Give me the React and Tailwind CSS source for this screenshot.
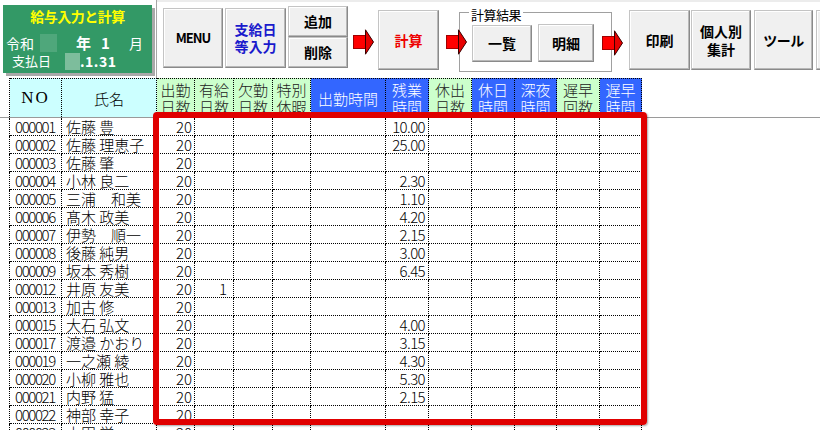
import React from "react";

const cols = [
  { w: "w-[10px]", label: "", bg: "bg-white", tc: "", blank: true },
  { w: "w-[52px]", label: "NO", bg: "bg-[#ccffff]", tc: "text-black", serif: true },
  { w: "w-[95px]", label: "氏名", bg: "bg-[#ccffff]", tc: "text-black" },
  { w: "w-[38px]", label: "出勤\n日数", bg: "bg-[#ccffcc]", tc: "text-[#222]" },
  { w: "w-[39px]", label: "有給\n日数", bg: "bg-[#ccffcc]", tc: "text-[#222]" },
  { w: "w-[39px]", label: "欠勤\n日数", bg: "bg-[#ccffcc]", tc: "text-[#222]" },
  { w: "w-[38px]", label: "特別\n休暇", bg: "bg-[#ccffcc]", tc: "text-[#222]" },
  { w: "w-[75px]", label: "出勤時間", bg: "bg-[#3366ff]", tc: "text-white" },
  { w: "w-[43px]", label: "残業\n時間", bg: "bg-[#3366ff]", tc: "text-white" },
  { w: "w-[43px]", label: "休出\n日数", bg: "bg-[#ccffcc]", tc: "text-[#222]" },
  { w: "w-[43px]", label: "休日\n時間", bg: "bg-[#3366ff]", tc: "text-white" },
  { w: "w-[42px]", label: "深夜\n時間", bg: "bg-[#3366ff]", tc: "text-white" },
  { w: "w-[43px]", label: "遅早\n回数", bg: "bg-[#ccffcc]", tc: "text-[#222]" },
  { w: "w-[42px]", label: "遅早\n時間", bg: "bg-[#3366ff]", tc: "text-white" },
];

const rows = [
  ["000001", "佐藤 豊", "20", "", "10.00"],
  ["000002", "佐藤 理恵子", "20", "", "25.00"],
  ["000003", "佐藤 肇", "20", "", ""],
  ["000004", "小林 良二", "20", "", "2.30"],
  ["000005", "三浦　和美", "20", "", "1.10"],
  ["000006", "髙木 政美", "20", "", "4.20"],
  ["000007", "伊勢　順一", "20", "", "2.15"],
  ["000008", "後藤 純男", "20", "", "3.00"],
  ["000009", "坂本 秀樹", "20", "", "6.45"],
  ["000012", "井原 友美", "20", "1", ""],
  ["000013", "加古 修", "20", "", ""],
  ["000015", "大石 弘文", "20", "", "4.00"],
  ["000017", "渡邉 かおり", "20", "", "3.15"],
  ["000019", "一之瀬 綾", "20", "", "4.30"],
  ["000020", "小柳 雅也", "20", "", "5.30"],
  ["000021", "内野 猛", "20", "", "2.15"],
  ["000022", "神部 幸子", "20", "", ""],
  ["000023", "山田 学", "20", "", ""],
];

const btn =
  "shrink-0 flex items-center justify-center text-center font-bold bg-[#f0f0f0] border border-[#c4c4c4] border-r-[#8a8a8a] border-b-[#8a8a8a] shadow-[inset_-1px_-1px_0_#b8b8b8,inset_1px_1px_0_#ffffff]";

function Arrow({ className }) {
  return (
    <svg width="21" height="26" viewBox="0 0 21 26" className={className}>
      <rect x="0.5" y="6.5" width="13" height="13" fill="#ff0000" stroke="#a00000" strokeWidth="1" />
      <polygon points="12.5,0.8 20.5,13 12.5,25.2" fill="#e60000" stroke="#3a0000" strokeWidth="1" />
    </svg>
  );
}

function Toolbar() {
  return (
    <div className="flex h-[78px] shrink-0">
      <div className="w-[157px] h-[78px] shrink-0 border-r border-[#a6a6a6]">
        <div className="ml-[3px] mt-[5px] w-[149px] h-[68px] bg-[#339966] shadow-[3px_3px_0_#a9a9a9] text-white flex flex-col">
          <div className="h-[22px] flex items-center justify-center text-[#ffff00] font-bold text-[14px] leading-[22px] tracking-[-0.5px]">
            給与入力と計算
          </div>
          <div className="mt-[7px] h-[18px] flex items-center text-[14px] leading-[18px]">
            <span className="ml-[3px]">令和</span>
            <span className="ml-[6px] w-[17px] h-[18px] bg-[#4fa77b]" />
            <span className="ml-[19px] font-bold text-[15px]">年</span>
            <span className="ml-[10px] font-bold text-[15px]">1</span>
            <span className="ml-[19px]">月</span>
          </div>
          <div className="h-[18px] flex items-center text-[13px] leading-[18px]">
            <span className="ml-[9px]">支払日</span>
            <span className="ml-[14px] w-[15px] h-[17px] bg-[#7dbd9c]" />
            <span className="font-bold text-[14px] tracking-[0.5px]">.1.31</span>
          </div>
        </div>
      </div>

      <div className="flex-1 flex items-start border-t-2 border-[#ececec] overflow-hidden">
        <div className={`${btn} ml-[6px] mt-[6px] w-[60px] h-[60px] text-[13px] tracking-[-1px] text-black`}>MENU</div>
        <div className={`${btn} ml-[2px] mt-[6px] w-[61px] h-[60px] text-[14px] leading-[17px] text-[#1a1acc]`}>
          支給日<br />等入力
        </div>
        <div className="ml-[2px] mt-[4px] w-[60px] flex flex-col shrink-0">
          <div className={`${btn} h-[31px] text-[14px] text-black`}>追加</div>
          <div className={`${btn} h-[31px] text-[14px] text-black`}>削除</div>
        </div>
        <Arrow className="ml-[5px] mt-[27px] shrink-0" />
        <div className={`${btn} ml-[4px] mt-[8px] w-[61px] h-[60px] text-[14px] text-[#ee0000]`}>計算</div>
        <Arrow className="ml-[7px] mt-[27px] shrink-0 relative z-10" />
        <div className="relative ml-[-8px] mt-[10px] w-[153px] h-[60px] shrink-0 border border-[#a0a0a0] flex items-start">
          <span className="absolute left-[9px] top-[-6px] bg-white px-[2px] text-[13px] leading-[16px] tracking-[-0.5px] text-black">
            計算結果
          </span>
          <div className={`${btn} ml-[12px] mt-[12px] w-[60px] h-[37px] text-[14px] text-black`}>一覧</div>
          <div className={`${btn} ml-[6px] mt-[11px] w-[56px] h-[38px] text-[14px] text-black`}>明細</div>
        </div>
        <Arrow className="ml-[-10px] mt-[28px] shrink-0 relative z-10" />
        <div className={`${btn} ml-[6px] mt-[8px] w-[61px] h-[60px] text-[14px] text-black`}>印刷</div>
        <div className={`${btn} ml-[1px] mt-[8px] w-[60px] h-[60px] text-[14px] leading-[18px] text-black`}>
          個人別<br />集計
        </div>
        <div className={`${btn} ml-[3px] mt-[8px] w-[59px] h-[60px] text-[14px] tracking-[-0.5px] text-black`}>ツール</div>
        <div className={`${btn} ml-[3px] mt-[8px] w-[60px] h-[60px] text-[14px] text-black`} />
      </div>
    </div>
  );
}

function HeaderRow() {
  return (
    <div className="flex h-[40px] border-b border-[#9a9a9a] shrink-0">
      {cols.map((c, i) => (
        <div
          key={i}
          className={`${c.w} ${c.bg} ${c.tc} shrink-0 h-[39px] border-r border-dotted border-black ${
            c.blank ? "" : "border-t"
          } flex items-center justify-center text-center whitespace-pre-line font-light ${
            c.serif
              ? "font-['Liberation_Serif',serif] text-[17px] tracking-[2px]"
              : "text-[15px] leading-[17px]"
          }`}
        >
          {c.label}
        </div>
      ))}
      <div className="flex-1" />
    </div>
  );
}

function DataRow({ r }) {
  const [no, name, shu, yu, zan] = r;
  const cell = "shrink-0 h-[18px] border-r border-b border-dotted border-black text-[15px] leading-[17px] font-light overflow-hidden whitespace-nowrap";
  return (
    <div className="flex h-[18px] shrink-0">
      <div className="w-[10px] shrink-0 h-[18px] border-r border-dotted border-black" />
      <div className={`${cell} w-[52px] pl-[5px] tracking-[-1.4px]`}>{no}</div>
      <div className={`${cell} w-[95px] pl-[4px]`}>{name}</div>
      <div className={`${cell} w-[38px] text-right pr-[2px]`}>{shu}</div>
      <div className={`${cell} w-[39px] text-right pr-[6px]`}>{yu}</div>
      <div className={`${cell} w-[39px]`} />
      <div className={`${cell} w-[38px]`} />
      <div className={`${cell} w-[75px]`} />
      <div className={`${cell} w-[43px] text-right pr-[3px] tracking-[-0.6px]`}>{zan}</div>
      <div className={`${cell} w-[43px]`} />
      <div className={`${cell} w-[43px]`} />
      <div className={`${cell} w-[42px]`} />
      <div className={`${cell} w-[43px]`} />
      <div className={`${cell} w-[42px]`} />
      <div className="flex-1" />
    </div>
  );
}

export default function App() {
  return (
    <div className="relative w-[820px] h-[430px] overflow-hidden bg-white text-black font-['Noto_Sans_CJK_JP',sans-serif] flex flex-col">
      <Toolbar />
      <HeaderRow />
      {rows.map((r) => (
        <DataRow key={r[0]} r={r} />
      ))}
      <div className="pointer-events-none absolute left-[153px] top-[112px] w-[494px] h-[313px] border-[6px] border-[#e00000] rounded-[4px] shadow-[1px_1px_2px_rgba(0,0,0,0.35)]" />
    </div>
  );
}
